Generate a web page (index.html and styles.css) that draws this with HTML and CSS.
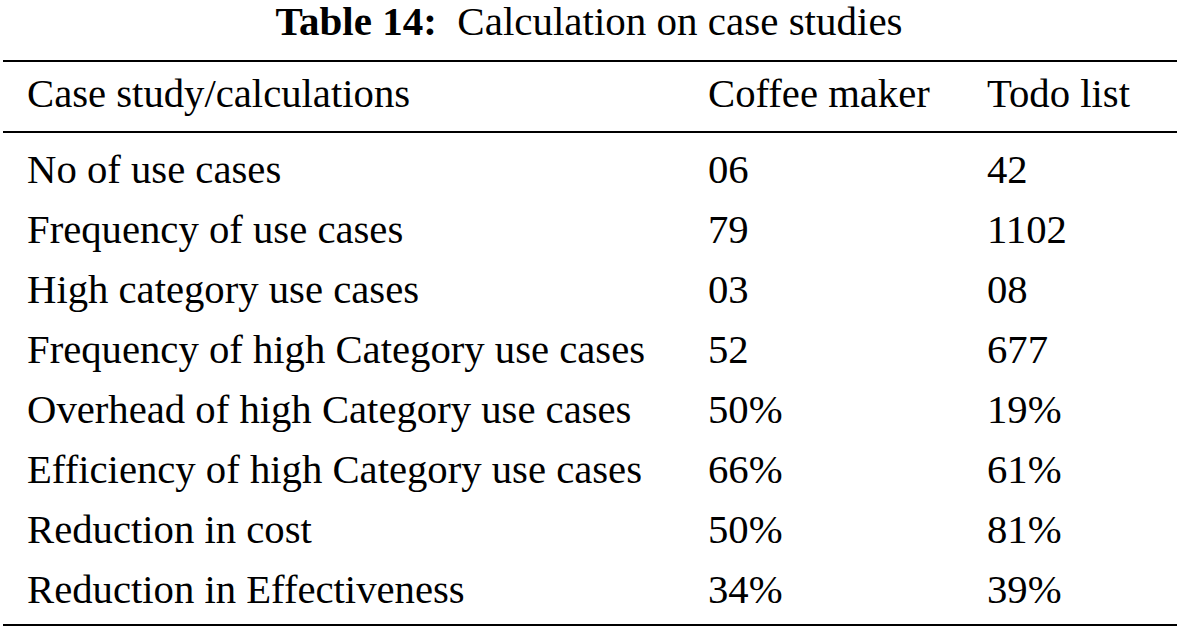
FILE: index.html
```html
<!DOCTYPE html>
<html>
<head>
<meta charset="utf-8">
<link rel="stylesheet" href="styles.css">
</head>
<body>
<div class="page">
  <div class="caption"><span class="label">Table 14:</span>&nbsp; Calculation on case studies</div>
  <table class="data">
    <thead>
      <tr><th>Case study/calculations</th><th>Coffee maker</th><th>Todo list</th></tr>
    </thead>
    <tbody>
      <tr><td>No of use cases</td><td>06</td><td>42</td></tr>
      <tr><td>Frequency of use cases</td><td>79</td><td>1102</td></tr>
      <tr><td>High category use cases</td><td>03</td><td>08</td></tr>
      <tr><td>Frequency of high Category use cases</td><td>52</td><td>677</td></tr>
      <tr><td>Overhead of high Category use cases</td><td>50%</td><td>19%</td></tr>
      <tr><td>Efficiency of high Category use cases</td><td>66%</td><td>61%</td></tr>
      <tr><td>Reduction in cost</td><td>50%</td><td>81%</td></tr>
      <tr><td>Reduction in Effectiveness</td><td>34%</td><td>39%</td></tr>
    </tbody>
  </table>
</div>
</body>
</html>
```
FILE: styles.css
```css
html, body {
  margin: 0;
  padding: 0;
  background: #fff;
}
body {
  font-family: "Liberation Serif", "Times New Roman", serif;
  color: #000;
}
.page {
  padding: 0 3px;
}
.caption {
  font-family: "Liberation Serif", "Times New Roman", serif;
  text-align: center;
  font-size: 41px;
  line-height: 42px;
  height: 42px;
  margin-bottom: 18px;
  padding-right: 2px;
}
.label {
  font-weight: bold;
}
.data {
  width: 100%;
  border-collapse: collapse;
  border-top: 2px solid #000;
  border-bottom: 2px solid #000;
  font-size: 40.7px;
  line-height: 60px;
}
.data th,
.data td {
  font-family: "Liberation Serif", "Times New Roman", serif;
  font-weight: normal;
  text-align: left;
  padding: 0;
  white-space: nowrap;
}
.data th:first-child,
.data td:first-child {
  padding-left: 24px;
  width: 681px;
}
.data th:nth-child(2),
.data td:nth-child(2) {
  width: 279px;
}
.data thead th {
  padding-top: 2px;
  padding-bottom: 7px;
  border-bottom: 2px solid #000;
}
.data tbody tr:first-child td {
  padding-top: 7px;
}
.data tbody tr:last-child td {
  padding-bottom: 4px;
}
```
